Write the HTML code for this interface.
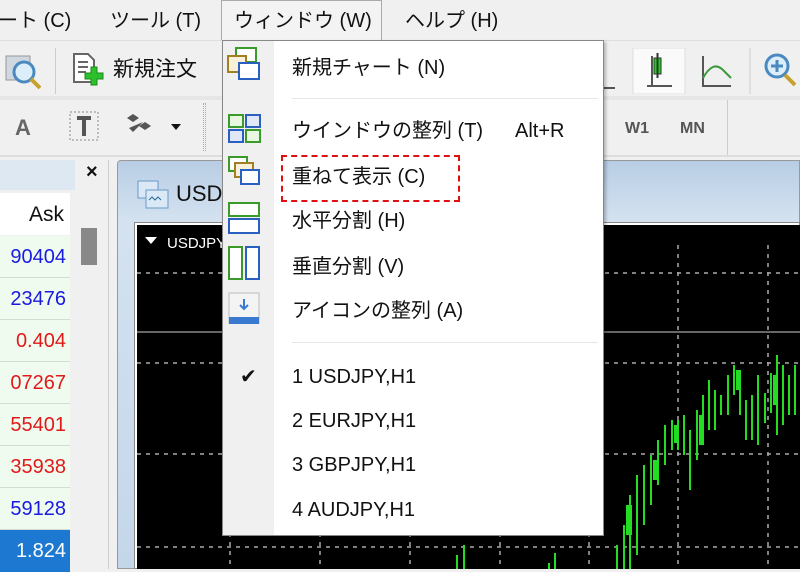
<!DOCTYPE html>
<html><head><meta charset="utf-8"><style>
*{margin:0;padding:0;box-sizing:border-box}
body{width:800px;height:569px;overflow:hidden;background:#f0f0f0;position:relative;font-family:"Liberation Sans","Noto Sans CJK JP",sans-serif;color:#111;line-height:1.2}
.a{position:absolute;white-space:nowrap}
.m{font-size:20px}
.row{position:absolute;left:0;width:70px;height:42px;background:#f0fbf0;border-bottom:1px solid #d4dcd4;font-size:20px;text-align:right;padding-right:4px;line-height:42px}
.mi{position:absolute;left:292px;font-size:20px;white-space:nowrap;line-height:24px}
</style></head><body>
<div class="a m" style="left:-2px;top:9px">ート (C)</div>
<div class="a m" style="left:110px;top:9px">ツール (T)</div>
<div class="a" style="left:221px;top:0;width:161px;height:41px;border:1px solid #aaa;border-bottom:none;background:#f3f3f3"></div>
<div class="a m" style="left:234px;top:9px">ウィンドウ (W)</div>
<div class="a m" style="left:405px;top:9px">ヘルプ (H)</div>
<div class="a" style="left:0;top:40px;width:800px;height:1px;background:#ddd"></div>
<div class="a" style="left:0;top:96px;width:800px;height:4px;background:#e6e6e6"></div>
<svg class="a" style="left:4px;top:52px" width="40" height="40"><rect x="2" y="4" width="24" height="24" fill="#cfd8e0" stroke="#999"/><circle cx="20" cy="20" r="10" fill="#dbeefa" stroke="#4a8ac0" stroke-width="3"/><line x1="27" y1="27" x2="36" y2="36" stroke="#c8a030" stroke-width="4"/></svg>
<div class="a" style="left:55px;top:48px;width:1px;height:46px;background:#ccc"></div>
<svg class="a" style="left:70px;top:50px" width="40" height="40"><path d="M4 4h14l6 6v22H4z" fill="#fff" stroke="#666" stroke-width="2"/><path d="M8 12h10M8 17h10M8 22h8" stroke="#666" stroke-width="2"/><path d="M21 17h6v6h6v6h-6v6h-6v-6h-6v-6h6z" fill="#2cc02c" stroke="#1a8a1a"/></svg>
<div class="a m" style="left:113px;top:57px;font-size:21px">新規注文</div>
<svg class="a" style="left:590px;top:48px" width="210" height="46"><path d="M5 20v20h20" stroke="#555" stroke-width="2" fill="none"/><rect x="43" y="0" width="52" height="46" fill="#fafafa" stroke="#ddd"/><path d="M62 8v30h20M57 38h25" stroke="#555" stroke-width="2" fill="none"/><rect x="64" y="10" width="7" height="16" fill="#1ed21e" stroke="#333"/><line x1="67.5" y1="5" x2="67.5" y2="30" stroke="#333" stroke-width="2"/><path d="M113 8v30h28" stroke="#555" stroke-width="2" fill="none"/><path d="M113 30q10-18 20-8l8 8" stroke="#3a9a3a" stroke-width="2" fill="none"/><line x1="160" y1="0" x2="160" y2="46" stroke="#ccc"/><circle cx="187" cy="18" r="11" fill="#dbeefa" stroke="#4a8ac0" stroke-width="3"/><path d="M181 18h12M187 12v12" stroke="#4a8ac0" stroke-width="3"/><line x1="195" y1="27" x2="205" y2="37" stroke="#c8a030" stroke-width="4"/></svg>
<div class="a" style="left:15px;top:115px;font-size:22px;font-weight:bold;color:#666">A</div>
<svg class="a" style="left:68px;top:110px" width="34" height="34"><rect x="2" y="2" width="28" height="28" fill="none" stroke="#888" stroke-dasharray="2 2"/><path d="M9 8h14M16 8v18" stroke="#555" stroke-width="4"/></svg>
<svg class="a" style="left:125px;top:112px" width="60" height="30"><path d="M2 6l6-4 6 4-6 4zM14 14l6-4 6 4-6 4zM4 16l4 4 10-10" fill="#555"/><path d="M46 12h10l-5 6z" fill="#111"/></svg>
<div class="a" style="left:203px;top:103px;width:3px;height:48px;border-left:1px dotted #aaa;border-right:1px dotted #aaa"></div>
<div class="a" style="left:625px;top:119px;font-size:16px;font-weight:bold;color:#555">W1</div>
<div class="a" style="left:680px;top:119px;font-size:16px;font-weight:bold;color:#555">MN</div>
<div class="a" style="left:727px;top:100px;width:1px;height:55px;background:#ccc"></div>
<div class="a" style="left:0;top:155px;width:800px;height:2px;background:#ddd"></div>
<div class="a" style="left:0;top:160px;width:75px;height:30px;background:#dde8f3"></div>
<div class="a" style="left:86px;top:160px;font-size:20px;font-weight:bold">×</div>
<div class="a" style="left:0;top:193px;width:70px;height:42px;background:#fff;font-size:21px;text-align:right;padding-right:6px;line-height:44px">Ask</div>
<div class="a" style="left:108px;top:160px;width:1px;height:409px;background:#ccc"></div>
<div class="a" style="left:81px;top:228px;width:16px;height:37px;background:#888"></div>
<div class="row" style="top:236px;color:#1a1ae0">90404</div>
<div class="row" style="top:278px;color:#1a1ae0">23476</div>
<div class="row" style="top:320px;color:#e01a1a">0.404</div>
<div class="row" style="top:362px;color:#e01a1a">07267</div>
<div class="row" style="top:404px;color:#e01a1a">55401</div>
<div class="row" style="top:446px;color:#e01a1a">35938</div>
<div class="row" style="top:488px;color:#1a1ae0">59128</div>
<div class="row" style="top:530px;color:#fff;background:#1c78d0;border:none">1.824</div>
<div class="a" style="left:117px;top:160px;width:683px;height:409px;background:linear-gradient(#b8cde4,#d4e2f0 60px,#c4d6ea);border:1px solid #999;border-radius:4px 0 0 0"></div>
<svg class="a" style="left:137px;top:180px" width="34" height="30"><rect x="1" y="1" width="20" height="17" fill="#dbe8f6" stroke="#6a9ac8"/><rect x="9" y="10" width="22" height="18" fill="#dbe8f6" stroke="#6a9ac8"/><path d="M12 20l3-3 3 3 3-3 3 3" stroke="#2a6a9a" fill="none"/></svg>
<div class="a" style="left:176px;top:181px;font-size:22px">USD</div>
<div class="a" style="left:134px;top:222px;width:666px;height:347px;background:#fff;border:1px solid #888"></div>
<svg class="a" style="left:137px;top:225px" width="663" height="344">
<rect width="663" height="344" fill="#000"/>
<g stroke="#aaa" stroke-dasharray="4 5" stroke-width="1.5">
<line x1="0" y1="48" x2="663" y2="48"/><line x1="0" y1="138" x2="663" y2="138"/><line x1="0" y1="229" x2="663" y2="229"/><line x1="0" y1="322" x2="663" y2="322"/>
<line x1="93" y1="20" x2="93" y2="344"/><line x1="183" y1="20" x2="183" y2="344"/><line x1="273" y1="20" x2="273" y2="344"/><line x1="363" y1="20" x2="363" y2="344"/><line x1="452" y1="20" x2="452" y2="344"/><line x1="541" y1="20" x2="541" y2="344"/><line x1="631" y1="20" x2="631" y2="344"/>
</g>
<line x1="0" y1="107" x2="663" y2="107" stroke="#888" stroke-width="1.5"/>
<path d="M8 12h12l-6 7z" fill="#fff"/>
<text x="30" y="23" fill="#fff" font-size="15" font-family="Liberation Sans">USDJPY</text>
<g stroke="#22dd22" stroke-width="2">
<path d="M320 330v14M327 320v24M412 338v6M418 328v16M480 320v24M487 300v44M493 270v74M500 250v80M507 240v60M514 230v50M521 215v45M528 200v40M535 195v30M541 195v30M547 190v40M553 205v60M560 185v50M566 170v40M572 155v50M578 165v40M584 170v20M591 150v40M597 140v30M603 155v35M609 175v40M615 170v45M621 150v70M628 168v30M634 148v40M640 130v80M646 140v60M652 150v40M658 140v50"/>
</g>
<g fill="#22dd22"><rect x="489" y="280" width="6" height="30"/><rect x="516" y="235" width="5" height="20"/><rect x="537" y="200" width="5" height="18"/><rect x="562" y="190" width="5" height="30"/><rect x="599" y="145" width="5" height="20"/><rect x="636" y="150" width="5" height="30"/></g>
</svg>
<div class="a" style="left:222px;top:40px;width:382px;height:496px;background:#fff;border:1px solid #888;box-shadow:2px 2px 3px rgba(0,0,0,.25)"></div>
<div class="a" style="left:223px;top:41px;width:51px;height:494px;background:#f0f0f0"></div>
<div class="a" style="left:292px;top:98px;width:306px;height:1px;background:#e6e6e6"></div>
<div class="a" style="left:292px;top:342px;width:306px;height:1px;background:#e6e6e6"></div>
<svg class="a" style="left:227px;top:45px" width="40" height="300">
<rect x="9" y="3" width="20" height="14" fill="#fff" stroke="#3a9a2a" stroke-width="2"/><rect x="1" y="11" width="18" height="16" fill="#f8f0d8" stroke="#a08020" stroke-width="2"/><rect x="12" y="18" width="20" height="16" fill="#fff" stroke="#2a60c0" stroke-width="2"/>
<rect x="2" y="70" width="14" height="12" fill="#e8f8e0" stroke="#3a9a2a" stroke-width="2"/><rect x="19" y="70" width="14" height="12" fill="#e0e8f8" stroke="#2a60c0" stroke-width="2"/><rect x="2" y="85" width="14" height="12" fill="#e0e8f8" stroke="#2a60c0" stroke-width="2"/><rect x="19" y="85" width="14" height="12" fill="#e8f8e0" stroke="#3a9a2a" stroke-width="2"/>
<rect x="2" y="112" width="18" height="14" fill="#fff" stroke="#3a9a2a" stroke-width="2"/><rect x="8" y="118" width="18" height="14" fill="#f8f0d8" stroke="#a08020" stroke-width="2"/><rect x="14" y="125" width="18" height="14" fill="#fff" stroke="#2a60c0" stroke-width="2"/>
<rect x="2" y="158" width="30" height="13" fill="#fff" stroke="#3a9a2a" stroke-width="2"/><rect x="2" y="174" width="30" height="14" fill="#fff" stroke="#2a60c0" stroke-width="2"/>
<rect x="2" y="202" width="13" height="32" fill="#fff" stroke="#3a9a2a" stroke-width="2"/><rect x="19" y="202" width="13" height="32" fill="#fff" stroke="#2a60c0" stroke-width="2"/>
<rect x="2" y="248" width="30" height="30" fill="#f4f4f4" stroke="#bbb"/><rect x="2" y="272" width="30" height="7" fill="#3a7ad0"/><path d="M17 254v10M13 260l4 4 4-4" stroke="#3a7ad0" stroke-width="2" fill="none"/>
</svg>
<div class="mi" style="top:56px">新規チャート (N)</div>
<div class="mi" style="top:119px">ウインドウの整列 (T)</div>
<div class="a" style="left:515px;top:119px;font-size:20px;line-height:24px">Alt+R</div>
<div class="a" style="left:281px;top:155px;width:179px;height:47px;border:2px dashed #e01010"></div>
<div class="mi" style="top:165px">重ねて表示 (C)</div>
<div class="mi" style="top:209px">水平分割 (H)</div>
<div class="mi" style="top:255px">垂直分割 (V)</div>
<div class="mi" style="top:299px">アイコンの整列 (A)</div>
<div class="a" style="left:240px;top:365px;font-size:20px;line-height:24px">✔</div>
<div class="mi" style="top:365px">1 USDJPY,H1</div>
<div class="mi" style="top:409px">2 EURJPY,H1</div>
<div class="mi" style="top:453px">3 GBPJPY,H1</div>
<div class="mi" style="top:498px">4 AUDJPY,H1</div>
</body></html>
